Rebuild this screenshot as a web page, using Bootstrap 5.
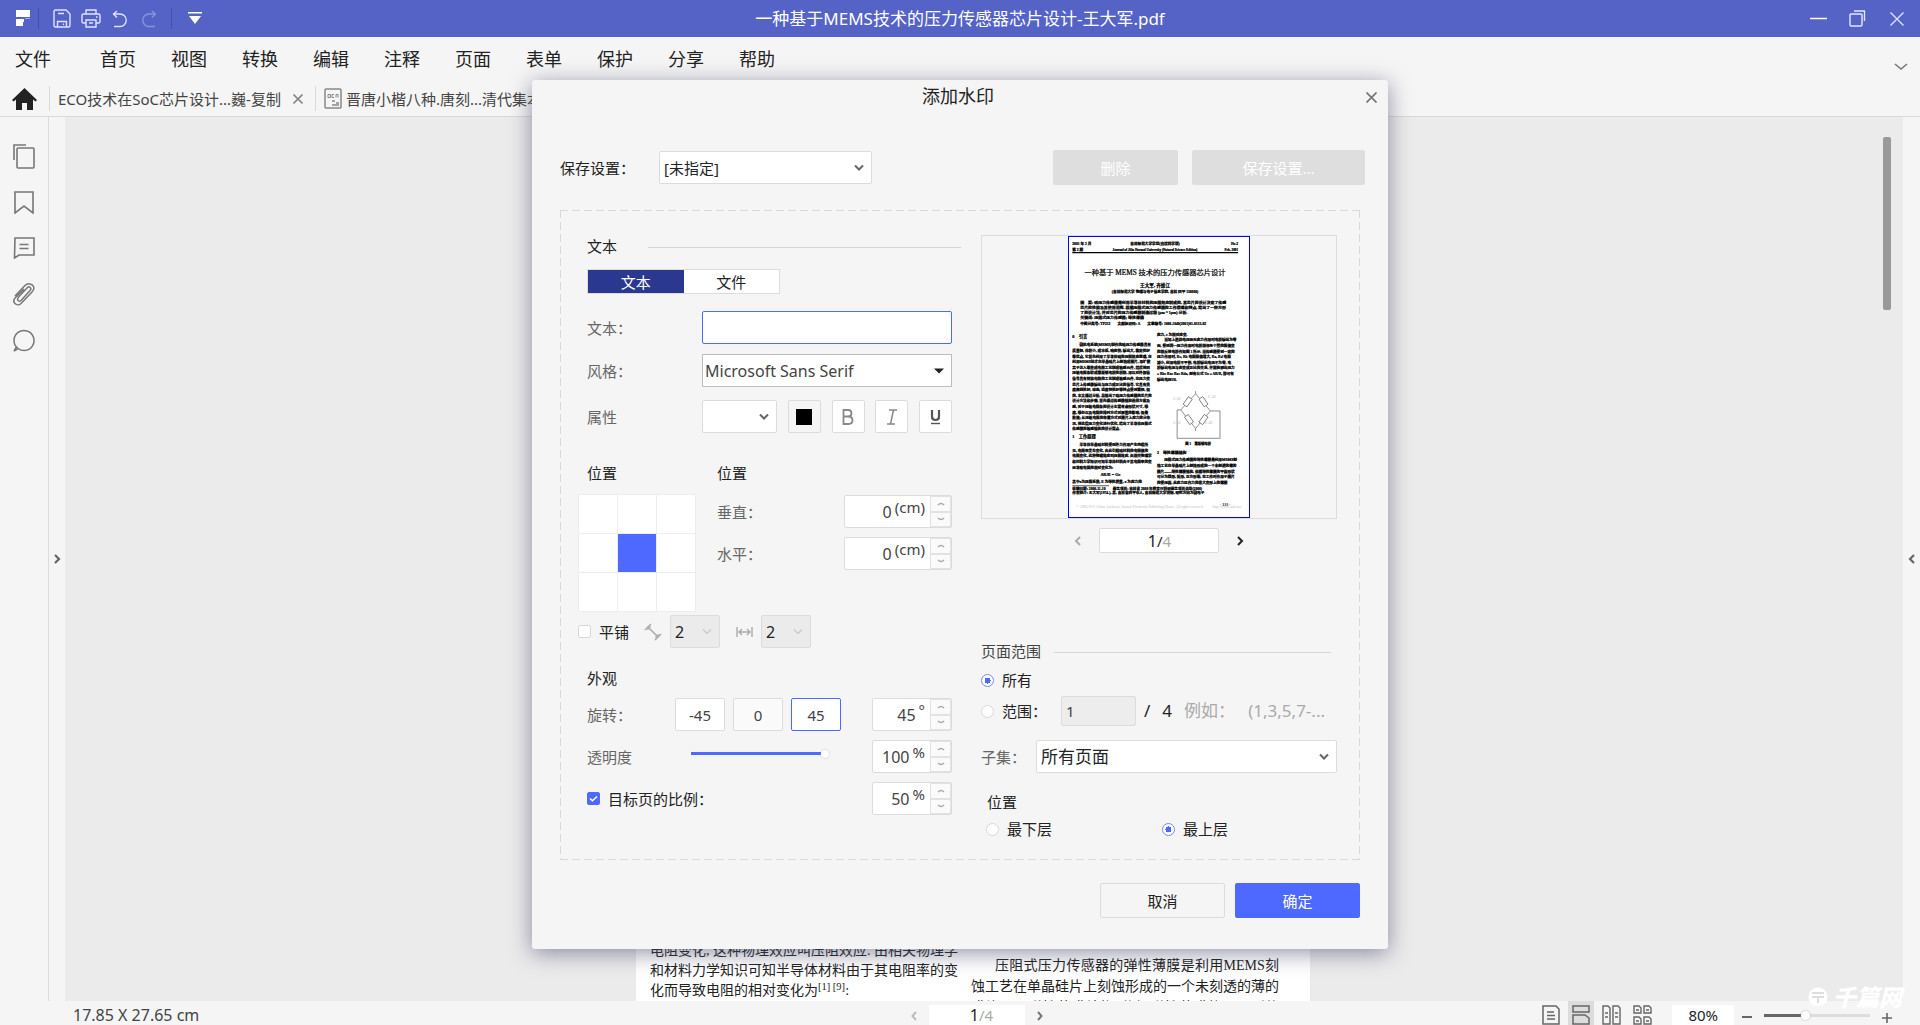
<!DOCTYPE html>
<html lang="zh-CN">
<head>
<meta charset="utf-8">
<meta name="viewport" content="width=device-width, initial-scale=1">
<title>一种基于MEMS技术的压力传感器芯片设计-王大军.pdf</title>
<link href="https://cdn.jsdelivr.net/npm/bootstrap@5.3.0/dist/css/bootstrap.min.css" rel="stylesheet">
<style>
:root{--accent:#4d69ff;--line:#dcdcdc;--pane:#f5f5f5}
body{font-family:"Noto Sans","Noto Sans CJK SC",sans-serif;font-size:15px;line-height:22px;color:#222;background:var(--pane)}
svg{display:block;flex:none}
button{font-family:inherit}
.bare{border:0;background:none;padding:0;color:inherit;display:flex;align-items:center;justify-content:center}
.app{height:100vh;min-height:1025px}
/* title bar */
.titlebar{height:37px;background:#5563c7;color:#fff}
.titlebar .tool{width:29px;height:37px}
.titlebar .split{width:1px;height:21px;background:#4350a8}
.titlebar .win{width:39px;height:37px}
.doc-title{font-size:17px}
/* menu and tabs */
.menubar{height:42px;font-size:18px;padding:2px 0 0 15px}
.menubar a{color:#222;text-decoration:none;width:71px}
.menubar a:first-child{margin-right:14px}
.tabstrip{height:38px;padding-top:2px;border-bottom:1px solid #d9d9d9;color:#444}
.tabstrip .rule{width:1px;height:25px;background:#d9d9d9}
/* work area */
.rail{width:49px;border-right:1px solid #dcdcdc;padding-top:16px}
.rail button{height:46px;width:48px}
.gutter{width:16px}
.gutter.end{width:17px}
.canvas{background:#ebebeb}
.sheet{width:674px;background:#fff;padding:0 31px 0 14px;margin-right:22px;font-family:"Liberation Serif","Noto Sans CJK SC",serif;font-size:14px;line-height:20px;color:#222}
.sheet .txt{width:308px}
.sheet .txt div{text-align:justify;text-align-last:justify;white-space:nowrap}
.sheet .right{margin-bottom:-17px;line-height:21px}
.scroller{position:absolute;right:12px;top:20px;width:8px;height:173px;border-radius:2px;background:#999}
.site-mark{position:absolute;right:18px;bottom:17px;gap:5px;color:#fff;font-size:23px;font-weight:900;font-style:italic}
/* status bar */
.status{height:24px;overflow:hidden;color:#444;line-height:20px}
.status .extent{padding:4px 0 0 73px;font-size:16px}
.status .pager{margin-left:34px}
.status .pager button{padding:10px 12px 0}
.status .box{background:#fff;height:26px;margin-top:4px}
/* dialog */
.dlg{position:absolute;top:80px;left:50%;transform:translateX(-50%);width:856px;background:var(--pane);border-radius:3px;box-shadow:0 4px 22px rgba(70,74,105,.6);padding:0 23px 31px 28px}
.dlg-head{height:32px;font-size:18px;padding-right:9px}
.dlg-close{position:absolute;right:11px;top:12px}
.presets{margin-top:38px}
.presets label{width:99px}
.presets .btn{margin-left:14px}
.panel{height:650px;margin:25px 5px 0 0;padding:1px;
 background:repeating-linear-gradient(90deg,#d9d9d9 0 8px,transparent 8px 12px) top/100% 1px no-repeat,repeating-linear-gradient(90deg,#d9d9d9 0 8px,transparent 8px 12px) bottom/100% 1px no-repeat,repeating-linear-gradient(#d9d9d9 0 8px,transparent 8px 12px) left/1px 100% no-repeat,repeating-linear-gradient(#d9d9d9 0 8px,transparent 8px 12px) right/1px 100% no-repeat}
.left-col{width:420px;padding:24px 29px 0 17px}
.right-col{width:356px;padding-top:24px}
.line-rule{height:1px;background:#d6d6d6;margin-top:2px}
.ind{padding-left:9px}
.row-gap{margin-top:9px}
.muted{color:#666}
.lab115{width:115px}.lab88{width:88px}.lab104{width:104px}.lab61{width:61px}
.field{height:33px;border:1px solid var(--line);border-radius:2px;background-color:#fff;color:#444;padding:0 4px;font-size:15px;line-height:22px}
select.field{appearance:none;background-repeat:no-repeat;background-position:right 7px center;background-size:10px 8px;background-image:url("data:image/svg+xml,%3Csvg xmlns='http://www.w3.org/2000/svg' viewBox='0 0 10 8'%3E%3Cpath d='M1 1.5l4 4 4-4' fill='none' stroke='%23666' stroke-width='2'/%3E%3C/svg%3E")}
select.field:disabled{background-color:#ebebeb;color:#222;opacity:1;font-size:16px;background-image:url("data:image/svg+xml,%3Csvg xmlns='http://www.w3.org/2000/svg' viewBox='0 0 10 8'%3E%3Cpath d='M1 1.5l4 4 4-4' fill='none' stroke='%23ccc' stroke-width='1.5'/%3E%3C/svg%3E")}
select.face{border-radius:0;border-color:#bdbdbd;padding-left:2px;font-size:16px;background-size:10px 6px;background-image:url("data:image/svg+xml,%3Csvg xmlns='http://www.w3.org/2000/svg' viewBox='0 0 10 6'%3E%3Cpath d='M0 0.5h10l-5 5z' fill='%23222'/%3E%3C/svg%3E")}
.field.active{border-color:var(--accent)}
.field:focus{outline:0}
.w33{width:33px}.w50{width:50px}.w75{width:75px}.w213{width:213px}
.btn-flat{height:35px;width:125px;border-radius:2px;font-size:15px;line-height:22px;padding:0;border:1px solid var(--line);color:#222}
.btn-flat.off,.btn-flat.off:disabled{background:#dedede;border-color:#dedede;color:#fff;opacity:1}
.btn-flat.go{background:var(--accent);border-color:var(--accent);color:#fff}
.btn-flat.wide{width:173px}
.seg{width:193px;height:25px;border:1px solid var(--line);background:#fff}
.seg button{flex:1;color:#222}
.seg button.on{background:#2a3890;color:#fff}
.spin{height:33px;width:108px;border:1px solid var(--line);border-radius:2px;background:#fff;color:#444}
.spin.slim{width:80px}
.spin input{border:0;background:none;min-width:0;flex:1;padding:0;text-align:right;font-size:16px;color:inherit}
.spin .unit{padding:0 5px 6px 3px;font-size:15px}
.spin .arrows{width:21px;background:#e2e2e2;gap:2px;padding:1px}
.spin .arrows button{flex:1;background:#fafafa}
.grid9{display:grid;grid-template-columns:repeat(3,1fr);gap:1px;width:118px;height:118px;padding:1px;background:#ededed}
.grid9 button{background:#fff}
.grid9 button.on{background:var(--accent)}
.tick{appearance:none;flex:none;width:13px;height:13px;border:1px solid #d8d8d8;border-radius:2px;background:#fff;margin:0}
.tick:checked{border-color:var(--accent);background:var(--accent) url("data:image/svg+xml,%3Csvg xmlns='http://www.w3.org/2000/svg' viewBox='0 0 11 11'%3E%3Cpath d='M2 5.5l2.5 2.3L9 3.5' fill='none' stroke='%23fff' stroke-width='1.5'/%3E%3C/svg%3E") center/11px no-repeat}
.dot{appearance:none;flex:none;width:13px;height:13px;border:1px solid #d8d8d8;border-radius:50%;background:#fff;margin:0}
.dot:checked{border-color:#7388ff;background:radial-gradient(circle,var(--accent) 0 3px,#fff 3px)}
.slide{appearance:none;width:138px;height:12px;margin:0 0 6px;background:linear-gradient(var(--accent),var(--accent)) center/100% 3px no-repeat}
.slide::-webkit-slider-thumb{appearance:none;width:8px;height:8px;border-radius:50%;background:#fff;box-shadow:0 0 2px #bbb}
.zoomer{appearance:none;width:106px;height:12px;background:linear-gradient(90deg,#666 40%,#ddd 40%) center/100% 3px no-repeat}
.zoomer::-webkit-slider-thumb{appearance:none;width:9px;height:9px;border-radius:50%;background:#fff;box-shadow:0 0 2px #aaa}
.preview{height:284px;border:1px solid var(--line)}
.preview svg{background:#fff;border:1px solid #00f}
.pagebox{width:120px;height:25px;border:1px solid var(--line);border-radius:2px;background:#fff}
.pagebox input,.numin{width:26px;border:0;padding:0;background:none;text-align:right;font-size:16px;color:#222}
.numin{height:20px}
.pale{color:#aaa}
.hint{font-size:17px;margin-left:12px}
</style>
</head>
<body>
<div class="app d-flex flex-column position-relative overflow-hidden">
  <header class="titlebar d-flex align-items-center position-relative">
    <svg class="ms-3" width="14" height="17" viewBox="0 0 14 17" fill="#fff"><path d="M0 0h14v7H0z"/><path d="M0 9h8v3H7v4H0z"/><path d="M9 8h5v1H9z" opacity=".5"/></svg>
    <span class="split ms-2 me-2"></span>
    <button class="bare tool" aria-label="保存"><svg width="18" height="19" viewBox="0 0 18 19" fill="none" stroke="#dfe2ff" stroke-width="1.4"><path d="M1 2.5Q1 1 2.5 1H13l4 4v11.500q0 1.500-1.500 1.500h-13Q1 18 1 16.500zM5 4.500h6M4.500 18v-5.500h9V18M10.500 14.500v1.500"/></svg></button>
    <button class="bare tool" aria-label="打印"><svg width="20" height="19" viewBox="0 0 20 19" fill="none" stroke="#dfe2ff" stroke-width="1.400"><path d="M5 5V1h10v4M5 14H2.500Q1 14 1 12.500v-6Q1 5 2.500 5h15Q19 5 19 6.500v6q0 1.500-1.500 1.500H15M5 11h10v7H5zM8 14h4M15 8h1.500"/></svg></button>
    <button class="bare tool" aria-label="撤销"><svg width="16" height="18" viewBox="0 0 16 18" fill="none" stroke="#dfe2ff" stroke-width="1.400"><path d="M5 1L1.500 4 5 7.500M1.500 4H8a6.200 6.200 0 010 12.500H2"/></svg></button>
    <button class="bare tool" aria-label="重做"><svg width="16" height="18" viewBox="0 0 16 18" fill="none" stroke="#8993dc" stroke-width="1.400"><path d="M11 1l3.500 3L11 7.500M14.500 4H8a6.200 6.200 0 000 12.500h6"/></svg></button>
    <span class="split ms-2"></span>
    <button class="bare tool ms-2" aria-label="更多"><svg width="14" height="14" viewBox="0 0 14 14" fill="#fff"><path d="M0 0h14v1.500H0zM1 4h12l-6 8z"/></svg></button>
    <span class="doc-title position-absolute start-50 translate-middle-x text-nowrap">一种基于MEMS技术的压力传感器芯片设计-王大军.pdf</span>
    <div class="d-flex ms-auto me-1">
      <button class="bare win" aria-label="最小化"><svg width="17" height="3" viewBox="0 0 17 3"><path d="M0 1.500h17" stroke="#fff" stroke-width="1.500"/></svg></button>
      <button class="bare win" aria-label="还原"><svg width="17" height="17" viewBox="0 0 17 17" fill="none" stroke="#e4e7ff" stroke-width="1.400"><rect x="1" y="4" width="12" height="12" rx="1"/><path d="M5 1h10.500v10"/></svg></button>
      <button class="bare win" aria-label="关闭"><svg width="14" height="14" viewBox="0 0 14 14" stroke="#dfe2ff" stroke-width="1.400"><path d="M.500.500l13 13M13.500.500l-13 13"/></svg></button>
    </div>
  </header>

  <nav class="menubar d-flex align-items-center">
    <a href="#">文件</a>
    <a href="#">首页</a><a href="#">视图</a><a href="#">转换</a><a href="#">编辑</a><a href="#">注释</a><a href="#">页面</a><a href="#">表单</a><a href="#">保护</a><a href="#">分享</a><a href="#">帮助</a>
    <button class="bare ms-auto me-2 px-1 pt-3" aria-label="收起功能区"><svg width="14" height="8" viewBox="0 0 14 8" fill="none" stroke="#777" stroke-width="1.600"><path d="M1 1l6 5 6-5"/></svg></button>
  </nav>

  <div class="tabstrip d-flex align-items-center">
    <button class="bare ps-2 ms-1 me-2 pe-1" aria-label="主页"><svg width="25" height="22" viewBox="0 0 25 22" fill="#222"><path d="M12.500 0L25 12l-1.500 1.500L21 11.500V22h-6v-7h-5v7H4V11.500L1.500 13.500 0 12z"/></svg></button>
    <span class="rule"></span>
    <span class="ps-2 text-nowrap">ECO技术在SoC芯片设计...巍-复制</span>
    <button class="bare ms-2 me-2 px-1" aria-label="关闭标签"><svg width="10" height="10" viewBox="0 0 10 10" stroke="#888" stroke-width="1.600"><path d="M.500.500l9 9M9.500.500l-9 9"/></svg></button>
    <span class="rule"></span>
    <svg class="ms-2 me-1" width="18" height="21" viewBox="0 0 18 21" fill="none" stroke="#888" stroke-width="1.500"><rect x="1" y="1" width="16" height="19" rx="1"/><path d="M4 6.500h2.500v3H4zM10 6.500H8v3h2M12 9.500v-3h2v3" stroke-width="1"/><path d="M8 13h3M8 17h7M12 15h3"/></svg>
    <span class="text-nowrap">晋唐小楷八种.唐刻...清代集本</span>
  </div>

  <main class="d-flex flex-grow-1 overflow-hidden">
    <aside class="rail d-flex flex-column">
      <button class="bare" aria-label="缩略图"><svg width="22" height="25" viewBox="0 0 22 25" fill="none" stroke="#777" stroke-width="1.600"><rect x="4" y="4" width="17" height="20" rx="1"/><path d="M1 16V1h12"/></svg></button>
      <button class="bare" aria-label="书签"><svg width="20" height="23" viewBox="0 0 20 23" fill="none" stroke="#777" stroke-width="1.600"><path d="M1 1h18v21l-9-7-9 7z"/></svg></button>
      <button class="bare" aria-label="批注"><svg width="22" height="22" viewBox="0 0 22 22" fill="none" stroke="#777" stroke-width="1.600"><path d="M2 1h19v17H6l-4.500 3zM6.500 7.500h9M6.500 11.500h9"/></svg></button>
      <button class="bare" aria-label="附件"><svg width="22" height="23" viewBox="0 0 22 23" fill="none" stroke="#777" stroke-width="1.500"><path d="M5 14.500L14.500 4.500c1.800-1.800 4.500.8 2.800 2.700L8.500 17c-3 3-5-.5-3-2.500M2 13L11.500 3c3.500-3.800 8-2 9 .5.800 2 0 4-1.500 5.500L8 20.500c-2 2-4.500 1.500-6 0s-1.500-4 .500-6L11 6"/></svg></button>
      <button class="bare" aria-label="搜索"><svg width="23" height="23" viewBox="0 0 23 23" fill="none" stroke="#777" stroke-width="1.500"><path d="M5 19.500A10 10 0 1111.500 21.500c-2.500 0-5-.8-6.500-2L1 22l2.500-4.500"/></svg></button>
    </aside>
    <div class="gutter d-flex align-items-center justify-content-center"><svg width="7" height="10" viewBox="0 0 7 10" fill="none" stroke="#666" stroke-width="2.200"><path d="M1 1l4 4-4 4"/></svg></div>
    <div class="canvas flex-grow-1 d-flex justify-content-center position-relative overflow-hidden">
      <div class="sheet d-flex align-items-end justify-content-between overflow-hidden">
        <div class="txt"><div>电阻变化, 这种物理效应叫压阻效应. 由相关物理学</div><div>和材料力学知识可知半导体材料由于其电阻率的变</div><span>化而导致电阻的相对变化为<sup>[1] [9]</sup>:</span></div>
        <div class="txt right"><div class="ps-4">压阻式压力传感器的弹性薄膜是利用MEMS刻</div><div>蚀工艺在单晶硅片上刻蚀形成的一个未刻透的薄的</div><div>膜片——弹性薄膜结构. 依据弹性薄膜的平面形状</div></div>
      </div>
      <div class="scroller"></div>
    </div>
    <div class="gutter end d-flex align-items-center justify-content-center"><svg width="7" height="10" viewBox="0 0 7 10" fill="none" stroke="#666" stroke-width="2.200"><path d="M6 1L2 5l4 4"/></svg></div>
  </main>

  <footer class="status d-flex align-items-start">
    <div class="flex-fill w-25 extent">17.85 X 27.65 cm</div>
    <div class="pager d-flex align-items-start">
      <button class="bare" aria-label="上一页"><svg width="6" height="10" viewBox="0 0 6 10" fill="none" stroke="#bbb" stroke-width="2"><path d="M5 1L1.500 5 5 9"/></svg></button>
      <div class="box px-4 d-flex justify-content-center"><input class="numin" aria-label="页码" value="1"><span class="pale pe-2">/4</span></div>
      <button class="bare" aria-label="下一页"><svg width="6" height="10" viewBox="0 0 6 10" fill="none" stroke="#777" stroke-width="2"><path d="M1 1l3.500 4L1 9"/></svg></button>
    </div>
    <div class="flex-fill w-25 d-flex justify-content-end align-items-start pe-4">
      <button class="bare px-1 me-1 pt-1" aria-label="单页"><svg width="18" height="20" viewBox="0 0 18 20" fill="none" stroke="#666" stroke-width="1.500"><path d="M1 1h13l3 3v15H1zM5 7h7M5 10.500h8M5 14h8"/></svg></button>
      <button class="bare px-1 me-1 pt-1" style="background:#dcdcdc" aria-label="连续"><svg width="18" height="20" viewBox="0 0 18 20" fill="none" stroke="#666" stroke-width="1.500"><path d="M1 1h16v6H1zM1 19v-9h12l4 3v6z"/></svg></button>
      <button class="bare px-1 me-1 pt-1" aria-label="双页"><svg width="19" height="20" viewBox="0 0 19 20" fill="none" stroke="#666" stroke-width="1.400"><path d="M1 1h5l2 2v16H1zM11 1h5l2 2v16h-7zM3 8h3M3 12h3M13 8h3M13 12h3"/></svg></button>
      <button class="bare px-1 me-3 pt-1" aria-label="双页连续"><svg width="19" height="20" viewBox="0 0 19 20" fill="none" stroke="#666" stroke-width="1.400"><path d="M1 1h5l2 2v5H1zM11 1h5l2 2v5h-7zM1 12h5l2 2v5H1zM11 12h5l2 2v5h-7zM3 5h3M13 5h3M3 16h3M13 16h3"/></svg></button>
      <span class="box px-3 text-dark">80%</span>
      <button class="bare px-2 pt-1 mt-2" aria-label="缩小"><svg width="10" height="8" viewBox="0 0 10 8"><path d="M0 4h10" stroke="#666" stroke-width="2"/></svg></button>
      <input class="zoomer mt-2 mx-1" type="range" value="38" aria-label="缩放">
      <button class="bare ps-2 pt-2 mt-1 pe-1" aria-label="放大"><svg width="10" height="10" viewBox="0 0 10 10"><path d="M0 5h10M5 0v10" stroke="#666" stroke-width="1.600"/></svg></button>
    </div>
  </footer>

  <div class="site-mark d-flex align-items-center"><svg width="20" height="20" viewBox="0 0 20 20"><circle cx="10" cy="10" r="9.500" fill="#fff"/><path d="M4 5h12v2H4zM4 9h12v2h-5v5H9v-5H4z" fill="#ddd"/></svg>千篇网</div>

  <section class="dlg" role="dialog" aria-label="添加水印">
    <div class="dlg-head d-flex justify-content-center align-items-center">添加水印</div>
    <button class="bare dlg-close" aria-label="关闭"><svg width="11" height="11" viewBox="0 0 11 11" stroke="#777" stroke-width="1.700"><path d="M.500.500l10 10M10.500.500l-10 10"/></svg></button>
    <div class="presets d-flex align-items-center">
      <label for="preset">保存设置：</label>
      <select id="preset" class="field w213 text-dark"><option>[未指定]</option></select>
      <button class="btn btn-flat off ms-auto" disabled>删除</button>
      <button class="btn btn-flat off wide" disabled>保存设置...</button>
    </div>

    <div class="panel d-flex">
      <div class="left-col">
        <div class="d-flex align-items-center ind"><span class="lab61">文本</span><span class="line-rule" style="width:313px;margin-right:-9px"></span></div>
        <div class="ind" style="margin-top:12px"><div class="seg d-flex"><button class="bare on">文本</button><button class="bare">文件</button></div></div>
        <div class="d-flex align-items-center ind" style="margin-top:17px"><label class="lab115 muted" for="wm">文本：</label><input id="wm" class="field active flex-grow-1" type="text"></div>
        <div class="d-flex align-items-center ind" style="margin-top:10px"><label class="lab115 muted" for="face">风格：</label><select id="face" class="field face flex-grow-1"><option>Microsoft Sans Serif</option></select></div>
        <div class="d-flex align-items-center ind" style="margin-top:13px">
          <label class="lab115 muted" for="size">属性</label>
          <div class="d-flex flex-grow-1 justify-content-between">
            <select id="size" class="field w75"><option></option></select>
            <button class="bare field w33" style="background:#f5f5f5" aria-label="颜色"><svg width="16" height="16"><path d="M0 0h16v16H0z"/></svg></button>
            <button class="bare field w33" aria-label="粗体"><svg width="12" height="16" viewBox="0 0 12 16" fill="none" stroke="#888" stroke-width="1.800"><path d="M1.500 1v14H6.500q4 0 4-3.700T6.500 7.500h-5H6q3.500 0 3.500-3.200T6 1z"/></svg></button>
            <button class="bare field w33" aria-label="斜体"><svg width="12" height="16" viewBox="0 0 12 16" fill="none" stroke="#888" stroke-width="1.500"><path d="M3 1h8M7.500 1l-3 14M1 15h8"/></svg></button>
            <button class="bare field w33" aria-label="下划线"><svg width="11" height="16" viewBox="0 0 11 16" fill="none" stroke="#555"><path d="M2 1v6.500q0 3.500 3.500 3.500T9 7.500V1" stroke-width="2.200"/><path d="M1 14.500h9" stroke-width="1.400"/></svg></button>
          </div>
        </div>
        <div class="d-flex" style="margin-top:29px">
          <div style="width:139px"><div class="ind" style="margin-bottom:10px">位置</div>
            <div class="grid9"><button class="bare" aria-label="左上"></button><button class="bare" aria-label="上"></button><button class="bare" aria-label="右上"></button><button class="bare" aria-label="左"></button><button class="bare on" aria-label="居中"></button><button class="bare" aria-label="右"></button><button class="bare" aria-label="左下"></button><button class="bare" aria-label="下"></button><button class="bare" aria-label="右下"></button></div>
          </div>
          <div class="flex-grow-1"><div style="margin-bottom:11px">位置</div>
            <div class="d-flex justify-content-between align-items-center"><label class="muted" for="vert">垂直：</label><div class="spin d-flex"><input id="vert" value="0"><span class="unit">(cm)</span><span class="arrows d-flex flex-column"></span></div></div>
            <div class="d-flex justify-content-between align-items-center row-gap"><label class="muted" for="horz">水平：</label><div class="spin d-flex"><input id="horz" value="0"><span class="unit">(cm)</span><span class="arrows d-flex flex-column"></span></div></div>
          </div>
        </div>
        <div class="d-flex align-items-center" style="margin-top:3px">
          <input class="tick" type="checkbox" id="tile"><label for="tile" class="ms-2" style="width:45px">平铺</label>
          <svg class="me-2" width="18" height="18" viewBox="0 0 18 18" fill="none" stroke="#aaa" stroke-width="1.500"><path d="M1 7l6-6M11 17l6-6M4 4l10 10"/><path d="M4 7V4h3M14 11v3h-3" stroke-width="1.200"/></svg>
          <select class="field w50" disabled aria-label="行间距"><option>2</option></select>
          <svg class="ms-3 me-2" width="17" height="10" viewBox="0 0 17 10" fill="none" stroke="#aaa" stroke-width="1.400"><path d="M1 0v10M16 0v10M3 5h11M6 2L3 5l3 3M11 2l3 3-3 3"/></svg>
          <select class="field w50" disabled aria-label="列间距"><option>2</option></select>
        </div>
        <div class="ind" style="margin-top:19px">外观</div>
        <div class="d-flex align-items-center ind row-gap"><label class="lab88 muted" for="rot">旋转：</label>
          <div class="d-flex gap-2"><button class="bare field w50">-45</button><button class="bare field w50" style="background:#fafafa">0</button><button class="bare field w50 active">45</button></div>
          <div class="spin slim d-flex ms-auto"><input id="rot" value="45"><span class="unit">°</span><span class="arrows d-flex flex-column"></span></div>
        </div>
        <div class="d-flex align-items-center ind row-gap"><label class="lab104 muted" for="opa">透明度</label><input id="opa" class="slide" type="range" value="100">
          <div class="spin slim d-flex ms-auto"><input value="100" aria-label="透明度数值"><span class="unit">%</span><span class="arrows d-flex flex-column"></span></div>
        </div>
        <div class="d-flex align-items-center ind row-gap"><input class="tick" type="checkbox" id="scale" checked><label for="scale" class="ms-2">目标页的比例：</label>
          <div class="spin slim d-flex ms-auto"><input value="50" aria-label="比例数值"><span class="unit">%</span><span class="arrows d-flex flex-column"></span></div>
        </div>
      </div>

      <div class="right-col">
        <div class="preview d-flex justify-content-center"><svg id="thumb" width="182" height="282" viewBox="54 48 546 842" role="img" aria-label="页面预览"></svg></div>
        <div class="d-flex justify-content-center align-items-center" style="margin-top:9px;gap:14px">
          <button class="bare px-1" aria-label="预览上一页"><svg width="7" height="10" viewBox="0 0 7 10" fill="none" stroke="#aaa" stroke-width="2"><path d="M6 1L2 5l4 4"/></svg></button>
          <div class="pagebox d-flex align-items-center justify-content-center"><input aria-label="预览页码" value="1">/<span class="pale pe-3">4</span></div>
          <button class="bare px-1" aria-label="预览下一页"><svg width="7" height="10" viewBox="0 0 7 10" fill="none" stroke="#222" stroke-width="2"><path d="M1 1l4 4-4 4"/></svg></button>
        </div>
        <div class="d-flex align-items-center" style="margin-top:87px"><span style="width:73px;color:#444">页面范围</span><span class="line-rule" style="width:277px"></span></div>
        <div class="d-flex align-items-center" style="margin-top:7px"><input class="dot" type="radio" name="range" id="all" checked><label for="all" class="ms-2">所有</label></div>
        <div class="d-flex align-items-center" style="margin-top:5px"><input class="dot" type="radio" name="range" id="some"><label for="some" class="ms-2" style="width:59px">范围：</label><input class="field w75" style="height:30px;background:#ededed" value="1" disabled aria-label="页码范围"><span class="hint ms-2">/</span><span class="hint">4</span><span class="hint pale">例如：</span><span class="hint pale ms-auto" style="padding-right:12px">(1,3,5,7-...</span></div>
        <div class="d-flex align-items-center" style="margin-top:14px"><label for="sub" class="muted" style="width:55px">子集：</label><select id="sub" class="field flex-grow-1 text-dark" style="font-size:17px"><option>所有页面</option></select></div>
        <div style="margin:18px 0 5px 6px">位置</div>
        <div class="d-flex" style="padding-left:5px"><span class="d-flex align-items-center" style="width:176px"><input class="dot" type="radio" name="layer" id="bot"><label for="bot" class="ms-2">最下层</label></span><input class="dot align-self-center" type="radio" name="layer" id="top" checked><label for="top" class="ms-2">最上层</label></div>
      </div>
    </div>

    <div class="d-flex justify-content-end" style="gap:10px;margin:23px 5px 0 0"><button class="btn btn-flat">取消</button><button class="btn btn-flat go">确定</button></div>
  </section>
</div>
<script>
// stepper arrows shared by every number field
document.querySelectorAll('.arrows').forEach(a => {
  a.innerHTML = ['M1 4q3-3 6 0', 'M1 1q3 3 6 0'].map((d, i) =>
    `<button class="bare" aria-label="${i ? '减' : '加'}"><svg width="8" height="5" viewBox="0 0 8 5" fill="none" stroke="#aaa" stroke-width="1.500"><path d="${d}"/></svg></button>`).join('');
});
// page preview: [x, baseline, size, text, anchor]
const S = 11, L = 64, R = 321, rows = [
  [64,69,11,'2001 年 2 月'],[315,69,11,'吉林师范大学学报(自然科学版)','middle'],[567,69,11,'No.2','end'],
  [64,87,11,'第 2 期'],[315,87,10,'Journal of Jilin Normal University (Natural Science Edition)','middle'],[567,87,10,'Feb. 2001','end'],
  [315,159,22,'一种基于 MEMS 技术的压力传感器芯片设计','middle'],
  [315,196,14,'王大军, 齐维江','middle'],
  [315,215,11,'(吉林师范大学 物理与电子信息学院, 吉林 四平 136000)','middle'],
  [88,248,12,'摘　要: 硅压力传感器是利用半导体材料的压阻效应制成的, 其芯片的设计决定了传感'],
  [88,264,12,'芯片的性能及其使用范围. 根据压阻式压力传感器的工作原理和特点, 给出了一种方形'],
  [88,279,12,'了的设计法, 并对芯片的压力传感器制造过程 (μm ~ 1μm) 分析.'],
  [88,294,12,'关键词: 压阻式压力传感器; 弹性薄膜'],
  [88,312,11,'中图分类号: TP212　　文献标识码: A　　文章编号: 1000-1840(2001)01-0133-02'],
  [64,352,13,'0　引言'],[64,655,13,'1　工作原理'],[321,702,12,'2　弹性薄膜结构'],
  [407,676,10,'图 1　惠斯顿电桥'],[150,770,13,'ΔR/R = Gε'],
  [64,813,11,'收稿日期: 2000-11-10　　基金项目: 吉林省 2000 年教育厅科研基金项目资助(2000)'],
  [64,825,11,'作者简介: 王大军(1974-), 男, 吉林省四平市人, 吉林师范大学讲师, 研究方向为微电子']
];
const body = (x, y, step, lines) => lines.forEach((t, i) => rows.push([x, y + i * step, S, t]));
body(L, 376, 17, ['　　微机电系统(MEMS)制作的硅压力传感器具有','质量轻, 体积小, 成本低, 响应快, 输出大, 稳定性好','等优点, 它首先利用了半导体硅的压阻效应原理, 在','利用MEMS技术在单晶硅片上刻蚀成膜片, 用扩散','离子注入等集成电路工艺制成敏感元件, 然后将四','压敏电阻条联成惠斯顿电桥的桥路, 用以对外部信','信号具有转换电路的工艺制成敏感元件, 在压力变','芯片上传感器输出与压力成正比的信号. 它具有灵','度高线性好, 动态, 温度特性好等特点受到重视, 但','的, 本文通过分析, 总结出了硅压力传感器的芯片的','设计方法和步骤, 首先通过传感器结构选择方案及','感, 对于压敏电阻条的设计主要考虑形状尺寸, 掺','度, 掺杂以及电阻的排列方式对测量的影响, 但是','数值; 从压敏电阻的布置方式对膜片上应力的分布','况, 将这些压力变化进行优化, 给出了半导体压阻式','传感器的敏感结构的设计要点.']);
body(L, 679, 17, ['　　半导体单晶硅材料受到外力作用产生肉眼所','见, 电阻率发生变化, 由此引起硅材料的电阻值的','电阻变化, 这种物理效应叫压阻效应. 由相关物理学','和材料力学知识可知半导体材料由于其电阻率的变','而导致电阻的相对变化为:']);
body(L, 792, 17, ['其中π为压阻系数, E 为弹性模量, σ 为应力的']);
body(R, 344, 17, ['应力, ε 为相对应变.','　　当加上激励电压而无应力作用时电桥输出为零','而, 受到同一压力作用时电桥相邻两个臂的阻值变','的相反将电桥作如图 1 所示. 当传感器受到一定的','压力作用时, Rc, Rb 电阻阻值增大, Ra, Rd 电阻','减小, 利用电桥不平衡, 电桥输出电压不为零, 电','桥输出电压与应变成正比的关系, 并能检测出压力','= Rbc Rac Rac Rda, 则有公式 Uo = ΔR/R, 即可有','输出电压U0.']);
body(R, 725, 17, ['　　压阻式压力传感器的弹性薄膜是利用MEMS刻','蚀工艺在单晶硅片上刻蚀形成的一个未刻透的薄的','膜片——弹性薄膜结构, 依据弹性薄膜的平面形状','可分为圆形, 矩形, 正方形等, 在工作时作用于膜片','的受压面, 此应力区作力的最大变形上的薄膜']);
document.getElementById('thumb').innerHTML =
  '<path d="M64 92h503" stroke="#000" stroke-width="4"/><path d="M64 799h112" stroke="#000" stroke-width="2"/>' +
  '<g fill="none" stroke="#777" stroke-width="2.500"><path d="M438 512v8l-45 49 45 56v8M438 520l45 52-45 53M382 569h11M483 572h29v83M382 569v86h130"/><g fill="#fff"><rect x="407" y="530" width="14" height="28" transform="rotate(35 414 544)"/><rect x="455" y="530" width="14" height="28" transform="rotate(-35 462 544)"/><rect x="411" y="584" width="14" height="28" transform="rotate(-35 418 598)"/><rect x="455" y="584" width="14" height="28" transform="rotate(35 462 598)"/></g></g>' +
  '<g font-family="Liberation Serif,Noto Sans CJK SC,serif" fill="#000" font-weight="700">' +
  rows.map(([x, y, s, t, a]) => `<text x="${x}" y="${y}" font-size="${s}" text-anchor="${a || 'start'}" stroke="#000" stroke-width=".7"${s < 20 ? '' : ' font-weight="400"'}>${t}</text>`).join('') +
  '<text x="512" y="860" font-size="12">· 133 ·</text></g>' +
  '<g font-family="Liberation Serif,serif" font-size="11" fill="#bbb"><text x="76" y="866">© 1994-2011 China Academic Journal Electronic Publishing House. All rights reserved.</text><text x="489" y="866">http://www.cnki.net</text><text x="370" y="538" font-size="9">R+ΔR</text><text x="476" y="534" font-size="9">R+ΔR</text><text x="370" y="612" font-size="9">R−ΔR</text><text x="466" y="612" font-size="9">R−ΔR</text></g>';
</script>
<script src="https://cdn.jsdelivr.net/npm/bootstrap@5.3.0/dist/js/bootstrap.bundle.min.js"></script>
</body>
</html>
